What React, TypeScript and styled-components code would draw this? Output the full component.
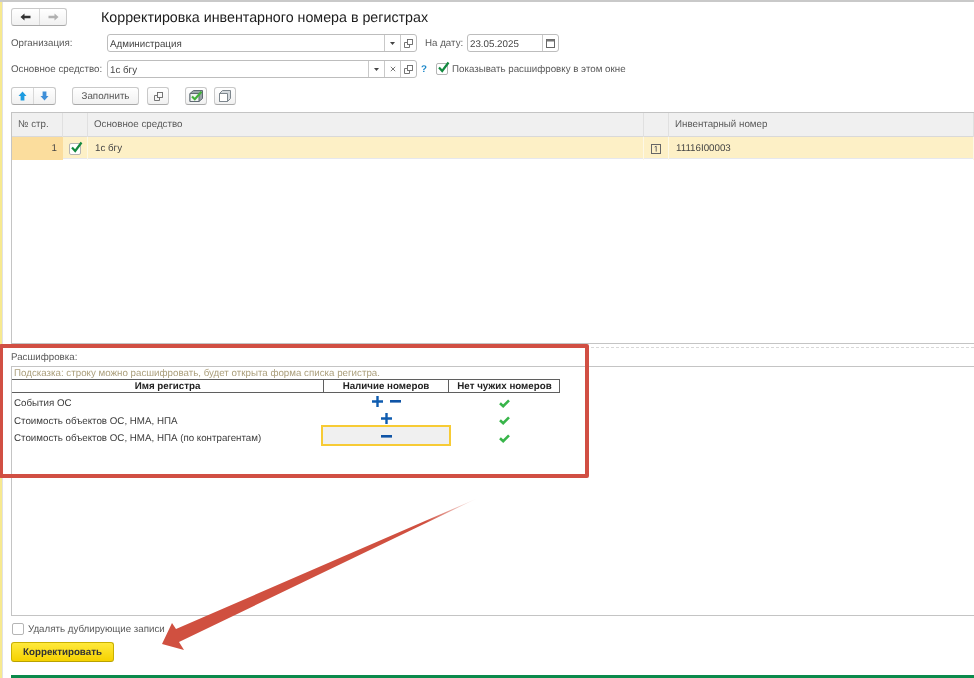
import styled, { createGlobalStyle } from "styled-components";

const GlobalStyle = createGlobalStyle`
  html, body {
    margin: 0;
    padding: 0;
    background: #fff;
  }
  body {
    font-family: "Liberation Sans", Arial, sans-serif;
    font-size: 9.75px;
    color: #4a4a4a;
    text-rendering: geometricPrecision;
  }
`;

const ArrowLeft = ({ color }: { color: string }) => (
  <svg width="11" height="8" viewBox="0 0 11 8">
    <path d="M0.5 4 L4.5 0.5 V2.8 H10.5 V5.2 H4.5 V7.5 Z" fill={color} />
  </svg>
);

const ArrowRight = ({ color }: { color: string }) => (
  <svg width="11" height="8" viewBox="0 0 11 8">
    <path d="M10.5 4 L6.5 0.5 V2.8 H0.5 V5.2 H6.5 V7.5 Z" fill={color} />
  </svg>
);

const BlueUp = () => (
  <svg width="9" height="10" viewBox="0 0 9 10">
    <path d="M4.5 0.5 L8.5 5 H6.4 V9.5 H2.6 V5 H0.5 Z" fill="#1d9be0" />
  </svg>
);

const BlueDown = () => (
  <svg width="9" height="10" viewBox="0 0 9 10">
    <path d="M4.5 9.5 L8.5 5 H6.4 V0.5 H2.6 V5 H0.5 Z" fill="#3f8fd8" />
  </svg>
);

const OpenIcon = () => (
  <svg width="9" height="9" viewBox="0 0 9 9" fill="none" stroke="#666" strokeWidth="0.9">
    <rect x="3.5" y="0.5" width="5" height="5" />
    <path d="M3.5 3.5 H0.5 V8.5 H5.5 V5.5" />
  </svg>
);

const DropIcon = () => (
  <svg width="5" height="3" viewBox="0 0 5 3">
    <path d="M0 0 H5 L2.5 3 Z" fill="#444" />
  </svg>
);

const CrossIcon = () => (
  <svg width="6" height="6" viewBox="0 0 6 6" stroke="#777" strokeWidth="1">
    <path d="M0.8 0.8 L5.2 5.2 M5.2 0.8 L0.8 5.2" />
  </svg>
);

const CalendarIcon = () => (
  <svg width="9" height="10" viewBox="0 0 9 10">
    <rect x="0.5" y="1.5" width="8" height="8" fill="#fff" stroke="#666" />
    <rect x="0.5" y="1.5" width="8" height="2" fill="#777" />
  </svg>
);

const CheckMark = () => (
  <svg width="13" height="13" viewBox="0 0 13 13" fill="none">
    <path d="M2 6.5 L5.2 10 L11.5 1.5" stroke="#12893f" strokeWidth="2.2" />
  </svg>
);

const CubeChecked = () => (
  <svg width="15" height="14" viewBox="0 0 15 14" fill="none">
    <path d="M1 4.5 L4.5 1.5 H13.5 V9.5 L10 12.5 H1 Z" fill="#9aa4a8" stroke="#5f6a72" />
    <path d="M1 4.5 H10 V12.5 H1 Z" fill="#f0f2f2" stroke="#5f6a72" />
    <path d="M3 7.5 L5.8 10.2 L12.5 2.8" stroke="#42b03a" strokeWidth="2.2" />
  </svg>
);

const CubeOutline = () => (
  <svg width="14" height="14" viewBox="0 0 14 14" fill="none" stroke="#7d868d">
    <path d="M1.5 4.5 L4.5 1.5 H12.5 V9.5 L9.5 12.5 H1.5 Z" fill="#d5dade" />
    <path d="M1.5 4.5 H9.5 V12.5 H1.5 Z" fill="#fff" />
  </svg>
);

const PlusIcon = () => (
  <svg width="11" height="11" viewBox="0 0 11 11">
    <path d="M4.3 0 H6.7 V4.3 H11 V6.7 H6.7 V11 H4.3 V6.7 H0 V4.3 H4.3 Z" fill="#0f5cb0" />
  </svg>
);

const MinusIcon = () => (
  <svg width="11" height="3" viewBox="0 0 11 3">
    <rect width="11" height="2.6" fill="#0f54a6" />
  </svg>
);

const SmallCheck = () => (
  <svg width="11" height="9" viewBox="0 0 11 9" fill="none">
    <path d="M1 4.2 L4.2 7.2 L10 1.4" stroke="#38b54a" strokeWidth="2.6" />
  </svg>
);

const RowNumberIcon = () => (
  <svg width="10" height="10" viewBox="0 0 10 10" fill="none" stroke="#666">
    <rect x="0.5" y="0.5" width="9" height="9" />
    <path d="M3.7 3 L5.2 2.2 V7.6" />
  </svg>
);

const App = () => {
  const registers = [
    { name: "События ОС", plus: true, minus: true, selected: false },
    { name: "Стоимость объектов ОС, НМА, НПА", plus: true, minus: false, selected: false },
    {
      name: "Стоимость объектов ОС, НМА, НПА (по контрагентам)",
      plus: false,
      minus: true,
      selected: true,
    },
  ];

  return (
    <Page>
      <GlobalStyle />
      <TopLine />
      <Body>
        <EdgeStrip />
        <Main>
          <Header>
            <ButtonGroup>
              <GroupButton $width={27}>
                <ArrowLeft color="#333" />
              </GroupButton>
              <GroupButton $width={26}>
                <ArrowRight color="#b0b0b0" />
              </GroupButton>
            </ButtonGroup>
            <Title>Корректировка инвентарного номера в регистрах</Title>
          </Header>

          <FormRow>
            <FieldLabel>Организация:</FieldLabel>
            <Field $width={310}>
              <FieldValue>Администрация</FieldValue>
              <FieldButton>
                <DropIcon />
              </FieldButton>
              <FieldButton>
                <OpenIcon />
              </FieldButton>
            </Field>
            <DateLabel>На дату:</DateLabel>
            <Field $width={92}>
              <FieldValue>23.05.2025</FieldValue>
              <FieldButton>
                <CalendarIcon />
              </FieldButton>
            </Field>
          </FormRow>

          <FormRow>
            <FieldLabel>Основное средство:</FieldLabel>
            <Field $width={310}>
              <FieldValue>1с бгу</FieldValue>
              <FieldButton>
                <DropIcon />
              </FieldButton>
              <FieldButton>
                <CrossIcon />
              </FieldButton>
              <FieldButton>
                <OpenIcon />
              </FieldButton>
            </Field>
            <Help>?</Help>
            <CheckLabel>
              <CheckBox>
                <CheckOver>
                  <CheckMark />
                </CheckOver>
              </CheckBox>
              <LabelText>Показывать расшифровку в этом окне</LabelText>
            </CheckLabel>
          </FormRow>

          <Toolbar>
            <ButtonGroup>
              <GroupButton $width={21}>
                <BlueUp />
              </GroupButton>
              <GroupButton $width={21}>
                <BlueDown />
              </GroupButton>
            </ButtonGroup>
            <ToolButton $width={67} $left={16}>
              <LabelText>Заполнить</LabelText>
            </ToolButton>
            <ToolButton $width={22} $left={8}>
              <OpenIcon />
            </ToolButton>
            <ToolButton $width={22} $left={16}>
              <CubeChecked />
            </ToolButton>
            <ToolButton $width={22} $left={7}>
              <CubeOutline />
            </ToolButton>
          </Toolbar>

          <Table>
            <HeaderRow>
              <HeadCell>№ стр.</HeadCell>
              <HeadCell />
              <HeadCell>Основное средство</HeadCell>
              <HeadCell />
              <HeadCell>Инвентарный номер</HeadCell>
            </HeaderRow>
            <DataRow>
              <NumberCell>1</NumberCell>
              <IconCell>
                <CheckBox>
                  <CheckOver>
                    <CheckMark />
                  </CheckOver>
                </CheckBox>
              </IconCell>
              <DataCell>1с бгу</DataCell>
              <IconCell>
                <RowNumberIcon />
              </IconCell>
              <DataCell>11116I00003</DataCell>
            </DataRow>
          </Table>

          <Splitter />
          <SectionLabel>Расшифровка:</SectionLabel>

          <ReportBox>
            <Hint>Подсказка: строку можно расшифровать, будет открыта форма списка регистра.</Hint>
            <ReportHead>
              <ReportHeadCell>Имя регистра</ReportHeadCell>
              <ReportHeadCell>Наличие номеров</ReportHeadCell>
              <ReportHeadCell>Нет чужих номеров</ReportHeadCell>
            </ReportHead>
            <ReportRows>
              {registers.map((row) => (
                <ReportRow key={row.name}>
                  <RegisterName>{row.name}</RegisterName>
                  <MarkCell $selected={row.selected}>
                    {row.plus && <PlusIcon />}
                    {row.minus && <MinusIcon />}
                  </MarkCell>
                  <CheckCell>
                    <SmallCheck />
                  </CheckCell>
                </ReportRow>
              ))}
            </ReportRows>
          </ReportBox>

          <BottomCheck>
            <CheckBox />
            <LabelText>Удалять дублирующие записи</LabelText>
          </BottomCheck>
          <PrimaryButton>Корректировать</PrimaryButton>
          <GreenBar />
        </Main>
      </Body>

      <RedFrame />
      <ArrowOverlay viewBox="0 0 974 678">
        <defs>
          <linearGradient id="tail" x1="478" y1="498" x2="425" y2="521" gradientUnits="userSpaceOnUse">
            <stop offset="0" stopColor="#d05040" stopOpacity="0" />
            <stop offset="1" stopColor="#d05040" />
          </linearGradient>
        </defs>
        <path
          d="M478 498 L176 629 L172 623 L162 644 L184 650 L179 642 Z"
          fill="url(#tail)"
        />
      </ArrowOverlay>
    </Page>
  );
};

const Page = styled.div`
  position: relative;
  width: 974px;
  height: 678px;
  overflow: hidden;
  background: #fff;
  filter: blur(0.35px);
`;
const TopLine = styled.div`
  height: 2px;
  background: #c9c9c9;
`;
const Body = styled.div`
  display: flex;
  height: 676px;
`;
const EdgeStrip = styled.div`
  width: 3px;
  background: #f7e98f;
  border-right: 1px solid #e2e2e2;
  box-sizing: border-box;
`;
const Main = styled.div`
  flex: 1;
  display: flex;
  flex-direction: column;
  padding-left: 8px;
  min-width: 0;
`;
const Header = styled.div`
  display: flex;
  align-items: center;
  margin-top: 6px;
  height: 18px;
`;
const Title = styled.div`
  margin: 2px 0 0 34px;
  font-size: 14.25px;
  color: #1c1c1c;
  white-space: nowrap;
`;
const ButtonGroup = styled.div`
  display: flex;
  height: 18px;
  border: 1px solid #c9c9c9;
  border-bottom-color: #a9a9a9;
  border-radius: 3px;
  box-sizing: border-box;
  background: linear-gradient(#fff, #f1f1f1);
`;
const GroupButton = styled.div<{ $width: number }>`
  width: ${(p) => p.$width}px;
  display: flex;
  align-items: center;
  justify-content: center;
  & + & {
    border-left: 1px solid #d8d8d8;
  }
`;
const FormRow = styled.div`
  display: flex;
  align-items: center;
  margin-top: 8px;
  height: 18px;
`;
const FieldLabel = styled.div`
  width: 96px;
  margin-top: 1px;
  color: #595959;
  white-space: nowrap;
`;
const Field = styled.div<{ $width: number }>`
  display: flex;
  width: ${(p) => p.$width}px;
  height: 18px;
  box-sizing: border-box;
  border: 1px solid #bdbdbd;
  border-radius: 3px;
  background: #fff;
`;
const FieldValue = styled.div`
  flex: 1;
  padding: 1px 0 0 2px;
  line-height: 17px;
  color: #444;
  white-space: nowrap;
`;
const FieldButton = styled.div`
  width: 16px;
  box-sizing: border-box;
  display: flex;
  align-items: center;
  justify-content: center;
  border-left: 1px solid #c9c9c9;
`;
const DateLabel = styled.div`
  margin: 1px 0 0 8px;
  width: 42px;
  color: #595959;
  white-space: nowrap;
`;
const Help = styled.div`
  margin: 1px 0 0 4px;
  width: 15px;
  color: #1b87c9;
  font-weight: bold;
`;
const CheckLabel = styled.div`
  display: flex;
  align-items: center;
  gap: 4px;
  color: #595959;
  white-space: nowrap;
`;
const LabelText = styled.span`
  padding-top: 1px;
`;
const CheckBox = styled.div`
  position: relative;
  width: 12px;
  height: 12px;
  box-sizing: border-box;
  border: 1px solid #b5b5b5;
  border-radius: 2px;
  background: #fff;
`;
const CheckOver = styled.div`
  position: absolute;
  left: 0;
  top: -3px;
`;
const Toolbar = styled.div`
  display: flex;
  margin-top: 9px;
  height: 18px;
`;
const ToolButton = styled.div<{ $width: number; $left: number }>`
  width: ${(p) => p.$width}px;
  margin-left: ${(p) => p.$left}px;
  display: flex;
  align-items: center;
  justify-content: center;
  box-sizing: border-box;
  border: 1px solid #c9c9c9;
  border-bottom-color: #a9a9a9;
  border-radius: 3px;
  background: linear-gradient(#fff, #f1f1f1);
  color: #555;
`;
const Table = styled.div`
  margin-top: 7px;
  height: 232px;
  box-sizing: border-box;
  border: 1px solid #c4c4c4;
  border-right: none;
`;
const HeaderRow = styled.div`
  display: grid;
  grid-template-columns: 51px 25px 556px 25px 1fr;
  height: 23px;
  background: #f0f0f0;
  border-bottom: 1px solid #d9d9d9;
`;
const HeadCell = styled.div`
  padding-left: 6px;
  line-height: 24px;
  color: #595959;
  border-right: 1px solid #e0e0e0;
  white-space: nowrap;
`;
const DataRow = styled.div`
  display: grid;
  grid-template-columns: 51px 25px 556px 25px 1fr;
  height: 21px;
  background: #fdf0c6;
  border-bottom: 1px solid #e6e8ee;
`;
const NumberCell = styled.div`
  background: #fbdd9d;
  text-align: right;
  padding-right: 6px;
  line-height: 23px;
  color: #444;
`;
const IconCell = styled.div`
  display: flex;
  align-items: center;
  justify-content: center;
  border-right: 1px solid #fdf8e6;
`;
const DataCell = styled.div`
  padding-left: 7px;
  line-height: 23px;
  color: #444;
  white-space: nowrap;
  border-right: 1px solid #fdf8e6;
`;
const Splitter = styled.div`
  margin-top: 3px;
  height: 0;
  border-top: 1px dashed #d8d8d8;
`;
const SectionLabel = styled.div`
  height: 17px;
  margin-top: 1px;
  line-height: 17px;
  color: #595959;
`;
const ReportBox = styled.div`
  height: 251px;
  box-sizing: border-box;
  border: 1px solid #c4c4c4;
  border-right: none;
`;
const Hint = styled.div`
  padding-left: 2px;
  height: 12px;
  line-height: 13px;
  color: #ab9f7c;
  white-space: nowrap;
`;
const ReportHead = styled.div`
  display: grid;
  grid-template-columns: 311px 125px 112px;
  width: 548px;
  height: 14px;
  box-sizing: border-box;
  border: 1px solid #5f5f5f;
  border-left: none;
`;
const ReportHeadCell = styled.div`
  font-weight: bold;
  color: #222;
  text-align: center;
  line-height: 13px;
  white-space: nowrap;
  & + & {
    border-left: 1px solid #5f5f5f;
  }
`;
const ReportRows = styled.div`
  margin-top: 2px;
`;
const ReportRow = styled.div`
  display: grid;
  grid-template-columns: 311px 125px 112px;
  width: 548px;
  height: 17.5px;
  align-items: center;
`;
const RegisterName = styled.div`
  padding: 1px 0 0 2px;
  color: #3c3c3c;
  white-space: nowrap;
`;
const MarkCell = styled.div<{ $selected: boolean }>`
  position: relative;
  display: flex;
  align-items: center;
  justify-content: center;
  gap: 7px;
  height: 13.5px;
  margin-bottom: 4px;
  padding-left: 1px;
  z-index: 0;
  &::before {
    content: ${(p) => (p.$selected ? '""' : "none")};
    position: absolute;
    z-index: -1;
    left: -2px;
    right: -3px;
    top: -4.5px;
    bottom: -3px;
    background: #f0f0f0;
    border: 2px solid #f7cb35;
  }
`;
const CheckCell = styled.div`
  display: flex;
  justify-content: center;
`;
const BottomCheck = styled.div`
  display: flex;
  align-items: center;
  gap: 4px;
  margin: 7px 0 0 1px;
  height: 12px;
  color: #595959;
  white-space: nowrap;
`;
const PrimaryButton = styled.div`
  margin-top: 7px;
  width: 103px;
  height: 20px;
  box-sizing: border-box;
  border: 1px solid #c9b000;
  border-bottom-color: #b9a200;
  border-radius: 3px;
  background: linear-gradient(#ffe93c, #f6d200);
  color: #333;
  font-weight: bold;
  text-align: center;
  line-height: 20px;
`;
const GreenBar = styled.div`
  margin-top: 13px;
  height: 3px;
  background: #0a8a4b;
`;
const RedFrame = styled.div`
  position: absolute;
  left: -1px;
  top: 343.5px;
  width: 590px;
  height: 134.5px;
  box-sizing: border-box;
  border: 4px solid #d14f43;
  border-radius: 2px;
  pointer-events: none;
`;
const ArrowOverlay = styled.svg`
  position: absolute;
  left: 0;
  top: 0;
  width: 974px;
  height: 678px;
  pointer-events: none;
`;

export default App;
